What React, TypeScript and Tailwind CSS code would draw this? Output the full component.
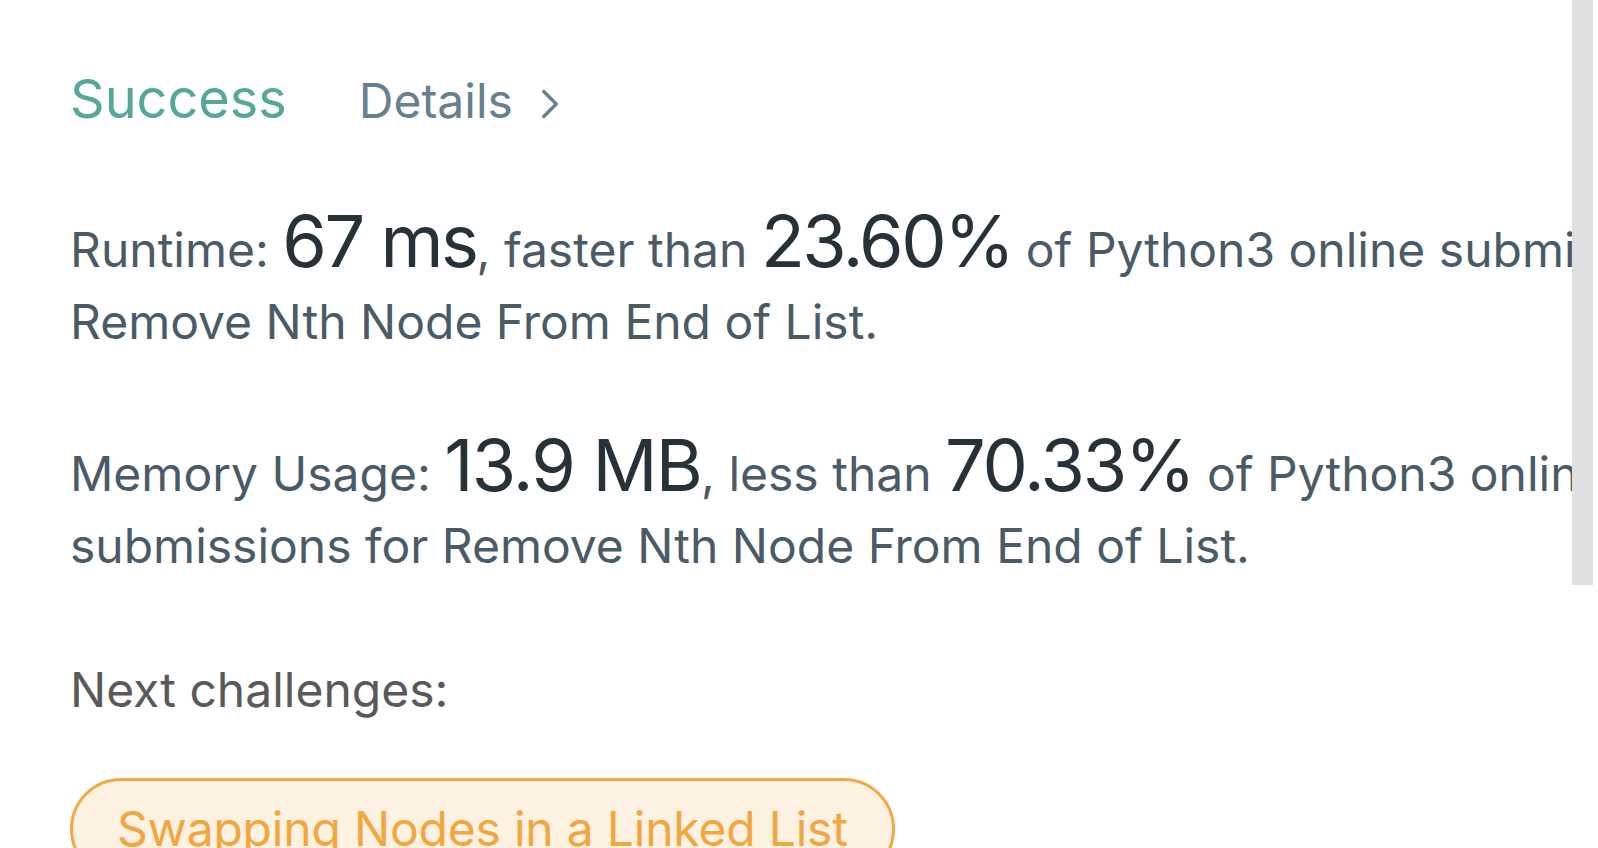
import { ChevronRight } from "lucide-react"

const font = { fontFamily: "Inter, 'Noto Sans', sans-serif" }

const Big = ({
  children,
  className,
}: {
  children: React.ReactNode
  className?: string
}) => (
  <span
    className={
      "text-[72px] leading-[0] text-[#263238] " +
      (className ?? "tracking-[-2.5px]")
    }
  >
    {children}
  </span>
)

export default function App() {
  return (
    <div
      className="flex h-[848px] w-full overflow-hidden bg-white"
      style={font}
    >
      <div className="min-w-0 flex-1 overflow-hidden pl-[70px]">
        {/* header */}
        <div className="flex h-[128px] items-baseline pt-[67px]">
          <span className="text-[54px] leading-[64px] text-[#55a797]">
            Success
          </span>
          <span className="ml-[72px] flex items-center text-[48px] leading-[64px] text-[#687f8d]">
            Details
            <ChevronRight
              className="ml-[12px] mt-[6px] h-[50px] w-[50px]"
              strokeWidth={1.6}
              aria-hidden
            />
          </span>
        </div>

        <div className="mt-[86px] whitespace-nowrap text-[48px] leading-[72px] text-[#4a5b67]">
          <div>
            Runtime: <Big>67 ms</Big>, faster than <Big>23.60%</Big> of Python3
            online submissions for
          </div>
          <div>Remove Nth Node From End of List.</div>
        </div>

        <div className="mt-[80px] whitespace-nowrap text-[48px] leading-[72px] text-[#4a5b67]">
          <div>
            Memory Usage: <Big className="tracking-[-1.8px]">13.9 MB</Big>,
            less than <Big className="tracking-[-2.2px]">70.33%</Big> of
            Python3 online
          </div>
          <div>submissions for Remove Nth Node From End of List.</div>
        </div>

        <p className="mt-[72px] text-[48px] leading-[72px] text-[#595959]">
          Next challenges:
        </p>

        <div className="mt-[52px]">
          <button className="rounded-full border-[3px] border-[#f4a742] bg-[#fdf2e2] px-[44px] py-[16px] text-[48px] leading-[64px] tracking-[-0.2px] text-[#f2a640]">
            Swapping Nodes in a Linked List
          </button>
        </div>
      </div>
      <div className="flex w-[26px] shrink-0 flex-col">
        <div className="h-[585px] w-[21px] bg-[#e0e0e0]" />
      </div>
    </div>
  )
}
